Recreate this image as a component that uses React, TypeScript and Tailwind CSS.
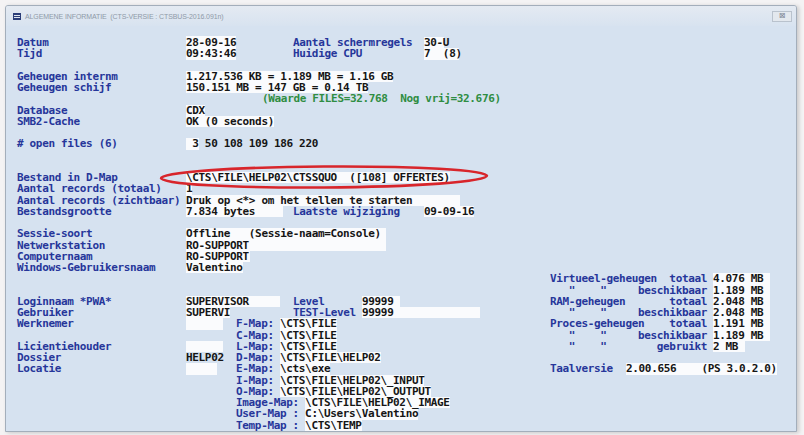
const row = "flex h-[11.25px] leading-[11.25px] whitespace-pre"
const lbl = "text-[#26369a]"
const val = "bg-[#fafbfd] text-[#151515]"

const layer: Record<number, string> = {
  1: "relative z-[1]",
  2: "relative z-[2]",
  3: "relative z-[3]",
}

function Blank() {
  return <div className="h-[11.25px]" />
}

function Label({ children }: { children?: React.ReactNode }) {
  return <span className={`w-[169px] shrink-0 ${lbl}`}>{children}</span>
}

function MemRow({ label, value, wide = true }: { label: string; value: string; wide?: boolean }) {
  return (
    <div className={row}>
      <span className={`w-[163px] shrink-0 ${lbl}`}>{label}</span>
      <span className={wide ? `w-[57px] ${val}` : `w-[32px] ${val}`}>{value}</span>
    </div>
  )
}

function MapRow({ left, box, map, path, z }: { left?: string; box?: string; map: string; path: string; z?: number }) {
  return (
    <div className={z ? `${layer[z]} ${row}` : row}>
      <Label>{left}</Label>
      <span className="w-[50px] shrink-0">
        {box === "wide" && <span className={`block h-[11.25px] w-[37px] ${val}`}> </span>}
        {box === "narrow" && <span className={`block h-[11.25px] w-[31px] ${val}`}> </span>}
        {box === "text" && <span className="text-[#151515]">HELP02</span>}
      </span>
      <span className={lbl}>{map}</span>
      <span className={`inline-block h-[11.25px] ${val}`}>{path}</span>
    </div>
  )
}

export default function App() {
  return (
    <div className="relative h-[435px] w-[804px] overflow-hidden bg-[#f4f3f4]">
      <div className="ml-[5px] mt-[5px] flex h-[427px] w-[792px] flex-col overflow-hidden rounded-t-[3px] border border-[#a3aebb] bg-[#d6e2f0] shadow-[2px_1px_4px_rgba(0,0,0,0.18)]">
        {/* title bar */}
        <div className="flex h-[20px] shrink-0 items-center justify-between bg-gradient-to-b from-[#e4eaf2] to-[#d8e3f0] pl-[7px] pr-[4px]">
          <div className="flex items-center gap-[4px]">
            <svg width="8" height="7" viewBox="0 0 8 7">
              <rect x="0" y="0" width="8" height="7" fill="#2c3e78" />
              <rect x="1" y="2" width="6" height="1" fill="#dfe6f0" />
              <rect x="1" y="4" width="6" height="1" fill="#dfe6f0" />
            </svg>
            <span className="font-['Liberation_Sans',sans-serif] text-[7px] leading-none tracking-[-0.1px] text-[#8f9aa8]">
              ALGEMENE INFORMATIE&nbsp;&nbsp;(CTS-VERSIE : CTSBUS-2016.091n)
            </span>
          </div>
          <div className="flex h-[11px] w-[20px] items-center justify-center border border-[#b9c2cd] bg-[#e3e8ee] font-['DejaVu_Sans',sans-serif] text-[8px] leading-none text-[#7b8593]">
            ⊠
          </div>
        </div>

        {/* body */}
        <div className="pl-[11px] pt-[11px] font-['DejaVu_Sans_Mono','Liberation_Mono',monospace] text-[11px] font-bold tracking-[-0.34px]">
          <div className={row}>
            <Label>Datum</Label>
            <span className="w-[107px] shrink-0"><span className={val}>28-09-16</span></span>
            <span className={`w-[131px] shrink-0 ${lbl}`}>Aantal schermregels</span>
            <span className={`w-[20px] ${val}`}>30-U</span>
          </div>
          <div className={row}>
            <Label>Tijd</Label>
            <span className="w-[107px] shrink-0"><span className={val}>09:43:46</span></span>
            <span className={`w-[131px] shrink-0 ${lbl}`}>Huidige CPU</span>
            <span className={`w-[35px] ${val}`}>7  (8)</span>
          </div>
          <Blank />
          <div className={row}>
            <Label>Geheugen internm</Label>
            <span className={val}>1.217.536 KB = 1.189 MB = 1.16 GB</span>
          </div>
          <div className={row}>
            <Label>Geheugen schijf</Label>
            <span className={val}>150.151 MB = 147 GB = 0.14 TB</span>
          </div>
          <div className={row}>
            <span className="w-[245px] shrink-0" />
            <span className="text-[#2f8d42]">(Waarde FILES=32.768  Nog vrij=32.676)</span>
          </div>
          <div className={row}>
            <Label>Database</Label>
            <span className={val}>CDX</span>
          </div>
          <div className={row}>
            <Label>SMB2-Cache</Label>
            <span className={val}>OK (0 seconds)</span>
          </div>
          <Blank />
          <div className={row}>
            <Label># open files (6)</Label>
            <span className={val}> 3</span>
            <span className="text-[#151515]"> 50 108 109 186 220</span>
          </div>
          <Blank />
          <Blank />
          <div className={row}>
            <Label>Bestand in D-Map</Label>
            <span className={val}>\CTS\FILE\HELP02\CTSSQUO  ([108] OFFERTES)</span>
          </div>
          <div className={row}>
            <Label>Aantal records (totaal)</Label>
            <span className={val}>1</span>
          </div>
          <div className={row}>
            <Label>Aantal records (zichtbaar)</Label>
            <span className={`w-[274px] ${val}`}>Druk op &lt;*&gt; om het tellen te starten</span>
          </div>
          <div className={row}>
            <Label>Bestandsgrootte</Label>
            <span className="w-[107px] shrink-0"><span className={`block w-[97px] ${val}`}>7.834 bytes</span></span>
            <span className={`w-[131px] shrink-0 ${lbl}`}>Laatste wijziging</span>
            <span className={val}>09-09-16</span>
          </div>
          <Blank />
          <div className={row}>
            <Label>Sessie-soort</Label>
            <span className={`w-[200px] ${val}`}>Offline   (Sessie-naam=Console)</span>
          </div>
          <div className={row}>
            <Label>Netwerkstation</Label>
            <span className={`w-[200px] ${val}`}>RO-SUPPORT</span>
          </div>
          <div className={row}>
            <Label>Computernaam</Label>
            <span className={`w-[64px] ${val}`}>RO-SUPPORT</span>
          </div>
          <div className={row}>
            <Label>Windows-Gebruikersnaam</Label>
            <span className={`w-[57px] ${val}`}>Valentino</span>
          </div>

          <div className="flex">
            {/* left block */}
            <div className="w-[533px] shrink-0">
              <Blank />
              <Blank />
              <div className={row}>
                <Label>Loginnaam *PWA*</Label>
                <span className="w-[107px] shrink-0"><span className={`block w-[94px] ${val}`}>SUPERVISOR</span></span>
                <span className={`w-[69px] shrink-0 ${lbl}`}>Level</span>
                <span className={`w-[38px] ${val}`}>99999</span>
              </div>
              <div className={row}>
                <Label>Gebruiker</Label>
                <span className="w-[107px] shrink-0"><span className={`block w-[44px] ${val}`}>SUPERVI</span></span>
                <span className={`w-[69px] shrink-0 ${lbl}`}>TEST-Level</span>
                <span className={`w-[118px] ${val}`}>99999</span>
              </div>
              <MapRow left="Werknemer" box="wide" map="F-Map: " path="\CTS\FILE" />
              <MapRow map="C-Map: " path="\CTS\FILE" />
              <MapRow left="Licientiehouder" box="wide" map="L-Map: " path="\CTS\FILE" />
              <MapRow left="Dossier" box="text" map="D-Map: " path="\CTS\FILE\HELP02" />
              <MapRow left="Locatie" box="narrow" map="E-Map: " path="\cts\exe" />
              <MapRow map="I-Map: " path="\CTS\FILE\HELP02\_INPUT" z={3} />
              <MapRow map="O-Map: " path="\CTS\FILE\HELP02\_OUTPUT" z={2} />
              <MapRow map="Image-Map: " path="\CTS\FILE\HELP02\_IMAGE" z={1} />
              <MapRow map="User-Map : " path="C:\Users\Valentino" />
              <MapRow map="Temp-Map : " path="\CTS\TEMP" />
            </div>

            {/* right block */}
            <div>
              <MemRow label="Virtueel-geheugen  totaal" value="4.076 MB" />
              <MemRow label={'   "    "     beschikbaar'} value="1.189 MB" />
              <MemRow label="RAM-geheugen       totaal" value="2.048 MB" />
              <MemRow label={'   "    "     beschikbaar'} value="2.048 MB" />
              <MemRow label="Proces-geheugen    totaal" value="1.191 MB" />
              <MemRow label={'   "    "     beschikbaar'} value="1.189 MB" />
              <MemRow label={'   "    "        gebruikt'} value="2 MB" wide={false} />
              <Blank />
              <div className={row}>
                <span className={`w-[76px] shrink-0 ${lbl}`}>Taalversie</span>
                <span className={val}>2.00.656    (PS 3.0.2.0)</span>
              </div>
            </div>
          </div>
        </div>
      </div>

      {/* red marker ellipse */}
      <svg className="absolute left-[158px] top-[164px]" width="332" height="26" viewBox="0 0 332 26">
        <ellipse cx="166" cy="13" rx="163" ry="10.5" fill="none" stroke="#d8252b" strokeWidth="2.6" transform="rotate(-0.4 166 13)" />
      </svg>
    </div>
  )
}
